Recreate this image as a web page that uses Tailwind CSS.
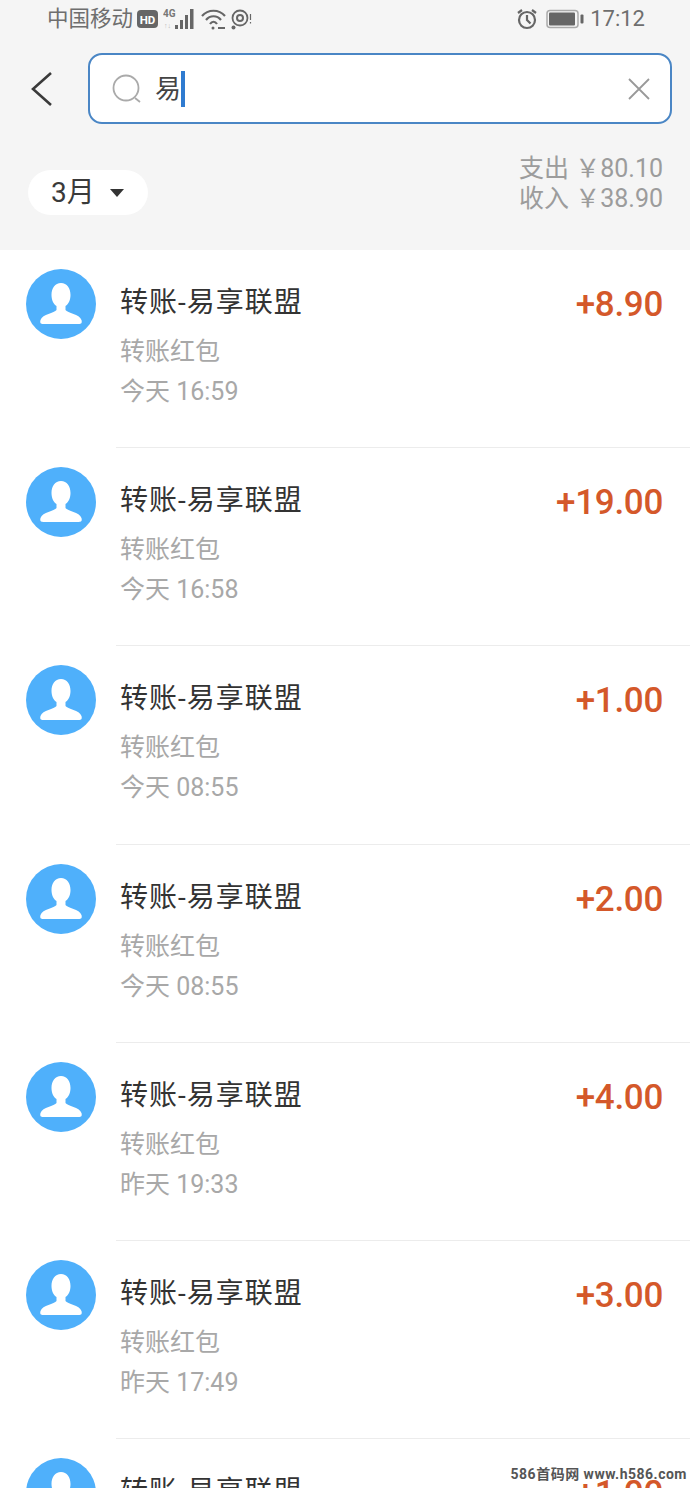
<!doctype html>
<html lang="zh"><head><meta charset="utf-8"><script src="https://cdn.jsdelivr.net/npm/@tailwindcss/browser@4"></script></head>
<body class="m-0">
<div class="relative w-[690px] h-[1488px] overflow-hidden bg-white font-['Roboto','Noto_Sans_CJK_SC',sans-serif]">
<header class="h-[250px] bg-[#f5f5f5] flex flex-col">
  <div class="h-[38px] flex items-center pl-[47px] pr-[45px] text-[#6e6e6e]">
    <span class="text-[21.5px] leading-none">中国移动</span>
    <svg class="ml-[4px]" width="21" height="20" viewBox="0 0 21 20"><rect y="1" width="21" height="18" rx="4" fill="#666"/><text x="10.5" y="14.5" text-anchor="middle" font-size="11.5" font-weight="700" fill="#fff" font-family="Roboto">HD</text></svg>
    <svg class="ml-[5px]" width="34" height="24" viewBox="0 0 34 24"><text x="0" y="10" font-size="10" font-weight="700" fill="#777" font-family="Roboto">4G</text><text x="1" y="21" font-size="7" fill="#bbb" font-family="Roboto">↑↓</text><g fill="#666"><rect x="12" y="18" width="3" height="4"/><rect x="17" y="13" width="3" height="9"/><rect x="22" y="8" width="3" height="14"/><rect x="27" y="2" width="3.5" height="20"/></g></svg>
    <svg class="ml-[4px]" width="25" height="22" viewBox="0 0 25 22" fill="none" stroke="#666" stroke-width="2.2"><path d="M1 8C7 1 18 1 24 8"/><path d="M5 12C9 7 16 7 20 12"/><path d="M9 16C11 13 14 13 16 16"/><circle cx="12" cy="20" r="1.5" fill="#666" stroke="none"/><path d="M17 20h7" stroke-width="2"/></svg>
    <svg class="ml-[5px]" width="21" height="21" viewBox="0 0 21 21" fill="none" stroke="#666"><circle cx="9" cy="9" r="7.5" stroke-width="1.8"/><circle cx="9" cy="9" r="3" stroke-width="2"/><circle cx="2.5" cy="18.5" r="2" fill="#666" stroke="none"/><path d="M19.5 5v6M19.5 13v1.5" stroke-width="1.2"/></svg>
    <span class="flex-1"></span>
    <svg width="22" height="22" viewBox="0 0 22 22" fill="none" stroke="#666" stroke-width="2.2"><circle cx="11" cy="12" r="8"/><path d="M11 7v5l3.5 3.5"/><path d="M2 5l4-3M20 5l-4-3"/></svg>
    <svg class="ml-[8px]" width="38" height="20" viewBox="0 0 38 20"><rect x="1" y="1.5" width="31" height="17" rx="3" fill="none" stroke="#aaa" stroke-width="1.5"/><rect x="3" y="3.5" width="26" height="13" rx="1" fill="#666"/><rect x="34.5" y="5.5" width="3" height="9" rx="1" fill="#666"/></svg>
    <span class="ml-[6px] text-[22px] leading-none">17:12</span>
  </div>
  <div class="h-[71px] mt-[15px] flex items-center">
    <svg class="ml-[30px] shrink-0" width="24" height="36" viewBox="0 0 24 36" fill="none" stroke="#3a3a3a" stroke-width="2.6"><path d="M21 2L3 18L21 34"/></svg>
    <div class="ml-[34px] w-[584px] h-[71px] bg-white rounded-[14px] border-2 border-[#4a86c5] flex items-center pl-[22px] pr-[20px]">
      <svg width="30" height="30" viewBox="0 0 30 30" fill="none" stroke="#aaa" stroke-width="1.8"><circle cx="14" cy="14" r="12.5"/><path d="M23 24l5 4"/></svg>
      <span class="ml-[13px] text-[26px] leading-none text-[#444]">易</span>
      <span class="w-[4px] h-[36px] bg-[#2f7bd0]"></span>
      <span class="flex-1"></span>
      <svg width="22" height="22" viewBox="0 0 22 22" fill="none" stroke="#999" stroke-width="1.8"><path d="M1 1L21 21M21 1L1 21"/></svg>
    </div>
  </div>
  <div class="flex justify-between items-start pl-[28px] pr-[27px] mt-[30px]">
    <div class="mt-[16px] w-[120px] h-[45px] rounded-full bg-white flex items-center pl-[23px] text-[#3a3a3a]">
      <span class="text-[28px] leading-none">3月</span>
      <span class="ml-[15px] w-0 h-0 border-x-[7px] border-x-transparent border-t-[8px] border-t-[#333]"></span>
    </div>
    <div class="text-right text-[#9c9c9c] text-[25px] leading-[30px]">
      <div>支出&nbsp;￥80.10</div>
      <div>收入&nbsp;￥38.90</div>
    </div>
  </div>
</header>

<main>
  <div class="flex h-[198.2px] pl-[26px]">
    <svg class="mt-[19px] shrink-0" width="70" height="70" viewBox="0 0 70 70"><circle cx="35" cy="35" r="35" fill="#4fb0fb"/><path d="M35 14c-6 0-9.5 5-9.5 12 0 5 2 9 5 11v4c-2 3-14 4-16 10-.7 3 0 4 3 4h35c3 0 3.700-1 3-4-2-6-14-7-16-10v-4c3-2 5-6 5-11 0-7-3.500-12-9.500-12z" fill="#fff"/></svg>
    <div class="ml-[20px] flex-1 flex justify-between border-b border-[#ececec] pr-[27px]">
      <div class="pl-[4px]">
        <div class="mt-[35px] text-[28px] leading-[36px] text-[#333] tracking-[1px]">转账-易享联盟</div>
        <div class="mt-[15px] text-[25px] leading-[32px] text-[#a8a8a8]">转账红包</div>
        <div class="mt-[8px] text-[25px] leading-[32px] text-[#a8a8a8]">今天 16:59</div>
      </div>
      <div class="mt-[35px] text-[35px] leading-[40px] font-medium text-[#d4582a] tracking-[-0.3px]">+8.90</div>
    </div>
  </div>
  <div class="flex h-[198.2px] pl-[26px]">
    <svg class="mt-[19px] shrink-0" width="70" height="70" viewBox="0 0 70 70"><circle cx="35" cy="35" r="35" fill="#4fb0fb"/><path d="M35 14c-6 0-9.5 5-9.5 12 0 5 2 9 5 11v4c-2 3-14 4-16 10-.7 3 0 4 3 4h35c3 0 3.700-1 3-4-2-6-14-7-16-10v-4c3-2 5-6 5-11 0-7-3.500-12-9.500-12z" fill="#fff"/></svg>
    <div class="ml-[20px] flex-1 flex justify-between border-b border-[#ececec] pr-[27px]">
      <div class="pl-[4px]">
        <div class="mt-[35px] text-[28px] leading-[36px] text-[#333] tracking-[1px]">转账-易享联盟</div>
        <div class="mt-[15px] text-[25px] leading-[32px] text-[#a8a8a8]">转账红包</div>
        <div class="mt-[8px] text-[25px] leading-[32px] text-[#a8a8a8]">今天 16:58</div>
      </div>
      <div class="mt-[35px] text-[35px] leading-[40px] font-medium text-[#d4582a] tracking-[-0.3px]">+19.00</div>
    </div>
  </div>
  <div class="flex h-[198.2px] pl-[26px]">
    <svg class="mt-[19px] shrink-0" width="70" height="70" viewBox="0 0 70 70"><circle cx="35" cy="35" r="35" fill="#4fb0fb"/><path d="M35 14c-6 0-9.5 5-9.5 12 0 5 2 9 5 11v4c-2 3-14 4-16 10-.7 3 0 4 3 4h35c3 0 3.700-1 3-4-2-6-14-7-16-10v-4c3-2 5-6 5-11 0-7-3.500-12-9.500-12z" fill="#fff"/></svg>
    <div class="ml-[20px] flex-1 flex justify-between border-b border-[#ececec] pr-[27px]">
      <div class="pl-[4px]">
        <div class="mt-[35px] text-[28px] leading-[36px] text-[#333] tracking-[1px]">转账-易享联盟</div>
        <div class="mt-[15px] text-[25px] leading-[32px] text-[#a8a8a8]">转账红包</div>
        <div class="mt-[8px] text-[25px] leading-[32px] text-[#a8a8a8]">今天 08:55</div>
      </div>
      <div class="mt-[35px] text-[35px] leading-[40px] font-medium text-[#d4582a] tracking-[-0.3px]">+1.00</div>
    </div>
  </div>
  <div class="flex h-[198.2px] pl-[26px]">
    <svg class="mt-[19px] shrink-0" width="70" height="70" viewBox="0 0 70 70"><circle cx="35" cy="35" r="35" fill="#4fb0fb"/><path d="M35 14c-6 0-9.5 5-9.5 12 0 5 2 9 5 11v4c-2 3-14 4-16 10-.7 3 0 4 3 4h35c3 0 3.700-1 3-4-2-6-14-7-16-10v-4c3-2 5-6 5-11 0-7-3.500-12-9.500-12z" fill="#fff"/></svg>
    <div class="ml-[20px] flex-1 flex justify-between border-b border-[#ececec] pr-[27px]">
      <div class="pl-[4px]">
        <div class="mt-[35px] text-[28px] leading-[36px] text-[#333] tracking-[1px]">转账-易享联盟</div>
        <div class="mt-[15px] text-[25px] leading-[32px] text-[#a8a8a8]">转账红包</div>
        <div class="mt-[8px] text-[25px] leading-[32px] text-[#a8a8a8]">今天 08:55</div>
      </div>
      <div class="mt-[35px] text-[35px] leading-[40px] font-medium text-[#d4582a] tracking-[-0.3px]">+2.00</div>
    </div>
  </div>
  <div class="flex h-[198.2px] pl-[26px]">
    <svg class="mt-[19px] shrink-0" width="70" height="70" viewBox="0 0 70 70"><circle cx="35" cy="35" r="35" fill="#4fb0fb"/><path d="M35 14c-6 0-9.5 5-9.5 12 0 5 2 9 5 11v4c-2 3-14 4-16 10-.7 3 0 4 3 4h35c3 0 3.700-1 3-4-2-6-14-7-16-10v-4c3-2 5-6 5-11 0-7-3.500-12-9.500-12z" fill="#fff"/></svg>
    <div class="ml-[20px] flex-1 flex justify-between border-b border-[#ececec] pr-[27px]">
      <div class="pl-[4px]">
        <div class="mt-[35px] text-[28px] leading-[36px] text-[#333] tracking-[1px]">转账-易享联盟</div>
        <div class="mt-[15px] text-[25px] leading-[32px] text-[#a8a8a8]">转账红包</div>
        <div class="mt-[8px] text-[25px] leading-[32px] text-[#a8a8a8]">昨天 19:33</div>
      </div>
      <div class="mt-[35px] text-[35px] leading-[40px] font-medium text-[#d4582a] tracking-[-0.3px]">+4.00</div>
    </div>
  </div>
  <div class="flex h-[198.2px] pl-[26px]">
    <svg class="mt-[19px] shrink-0" width="70" height="70" viewBox="0 0 70 70"><circle cx="35" cy="35" r="35" fill="#4fb0fb"/><path d="M35 14c-6 0-9.5 5-9.5 12 0 5 2 9 5 11v4c-2 3-14 4-16 10-.7 3 0 4 3 4h35c3 0 3.700-1 3-4-2-6-14-7-16-10v-4c3-2 5-6 5-11 0-7-3.500-12-9.500-12z" fill="#fff"/></svg>
    <div class="ml-[20px] flex-1 flex justify-between border-b border-[#ececec] pr-[27px]">
      <div class="pl-[4px]">
        <div class="mt-[35px] text-[28px] leading-[36px] text-[#333] tracking-[1px]">转账-易享联盟</div>
        <div class="mt-[15px] text-[25px] leading-[32px] text-[#a8a8a8]">转账红包</div>
        <div class="mt-[8px] text-[25px] leading-[32px] text-[#a8a8a8]">昨天 17:49</div>
      </div>
      <div class="mt-[35px] text-[35px] leading-[40px] font-medium text-[#d4582a] tracking-[-0.3px]">+3.00</div>
    </div>
  </div>
  <div class="flex h-[198.2px] pl-[26px]">
    <svg class="mt-[19px] shrink-0" width="70" height="70" viewBox="0 0 70 70"><circle cx="35" cy="35" r="35" fill="#4fb0fb"/><path d="M35 14c-6 0-9.5 5-9.5 12 0 5 2 9 5 11v4c-2 3-14 4-16 10-.7 3 0 4 3 4h35c3 0 3.700-1 3-4-2-6-14-7-16-10v-4c3-2 5-6 5-11 0-7-3.500-12-9.500-12z" fill="#fff"/></svg>
    <div class="ml-[20px] flex-1 flex justify-between pr-[27px]">
      <div class="pl-[4px]">
        <div class="mt-[35px] text-[28px] leading-[36px] text-[#333] tracking-[1px]">转账-易享联盟</div>
      </div>
      <div class="mt-[35px] text-[35px] leading-[40px] font-medium text-[#d4582a] tracking-[-0.3px]">+1.00</div>
    </div>
  </div>
</main>
<div class="absolute right-[3px] bottom-[5px] text-[14px] leading-[18px] font-bold text-[#555] tracking-[0.5px]">586首码网 www.h586.com</div>
</div>
</body></html>
